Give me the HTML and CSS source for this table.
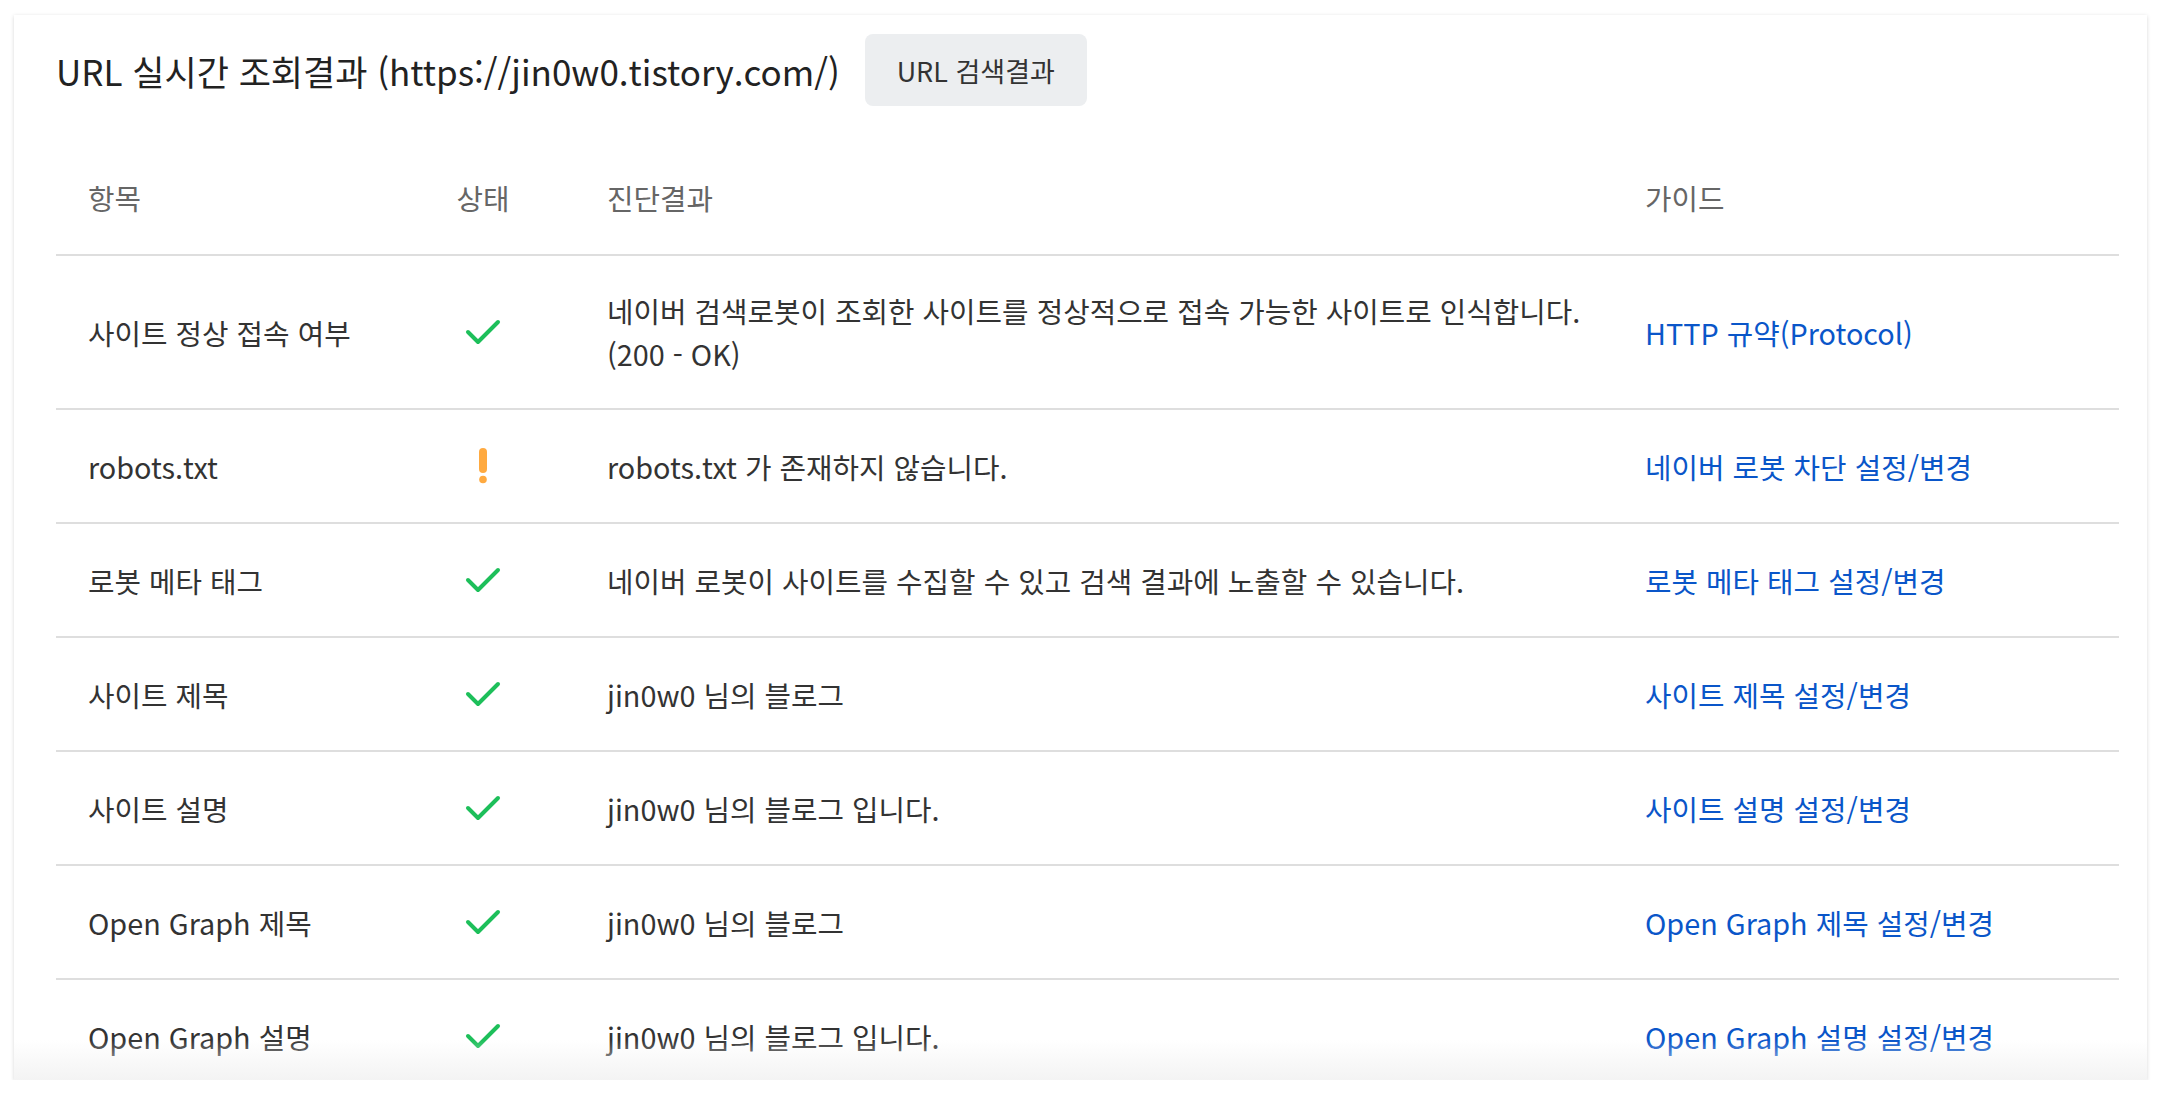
FILE: index.html
```html
<!DOCTYPE html>
<html lang="ko">
<head>
    <meta charset="UTF-8">
    <meta name="viewport" content="width=device-width, initial-scale=1.0">
    <title>URL 실시간 조회결과</title>
    <link rel="stylesheet" href="styles.css">
</head>
<body>

    <div class="result-box">
        <div class="result-head">
            <h2>URL 실시간 조회결과 (https://jin0w0.tistory.com/)</h2>
            <button type="button" class="btn-search">URL 검색결과</button>
        </div>

        <table class="result-table">
            <colgroup>
                <col class="col-item">
                <col class="col-state">
                <col class="col-desc">
                <col class="col-guide">
            </colgroup>
            <tr>
                <th>항목</th>
                <th class="state">상태</th>
                <th>진단결과</th>
                <th>가이드</th>
            </tr>
            <tr>
                <td>사이트 정상 접속 여부</td>
                <td class="state"><svg class="ico-ok" width="36" height="28" viewBox="0 0 36 28"><polyline points="3,14 13,24 33,4" /></svg></td>
                <td>네이버 검색로봇이 조회한 사이트를 정상적으로 접속 가능한 사이트로 인식합니다.<br>(200 - OK)</td>
                <td><a href="#">HTTP 규약(Protocol)</a></td>
            </tr>
            <tr>
                <td>robots.txt</td>
                <td class="state"><svg class="ico-warn" width="8" height="36" viewBox="0 0 8 36"><rect x="0" y="0" width="8" height="25" rx="4" /><circle cx="4" cy="31.5" r="3.8" /></svg></td>
                <td>robots.txt 가 존재하지 않습니다.</td>
                <td><a href="#">네이버 로봇 차단 설정/변경</a></td>
            </tr>
            <tr>
                <td>로봇 메타 태그</td>
                <td class="state"><svg class="ico-ok" width="36" height="28" viewBox="0 0 36 28"><polyline points="3,14 13,24 33,4" /></svg></td>
                <td>네이버 로봇이 사이트를 수집할 수 있고 검색 결과에 노출할 수 있습니다.</td>
                <td><a href="#">로봇 메타 태그 설정/변경</a></td>
            </tr>
            <tr>
                <td>사이트 제목</td>
                <td class="state"><svg class="ico-ok" width="36" height="28" viewBox="0 0 36 28"><polyline points="3,14 13,24 33,4" /></svg></td>
                <td>jin0w0 님의 블로그</td>
                <td><a href="#">사이트 제목 설정/변경</a></td>
            </tr>
            <tr>
                <td>사이트 설명</td>
                <td class="state"><svg class="ico-ok" width="36" height="28" viewBox="0 0 36 28"><polyline points="3,14 13,24 33,4" /></svg></td>
                <td>jin0w0 님의 블로그 입니다.</td>
                <td><a href="#">사이트 설명 설정/변경</a></td>
            </tr>
            <tr>
                <td>Open Graph 제목</td>
                <td class="state"><svg class="ico-ok" width="36" height="28" viewBox="0 0 36 28"><polyline points="3,14 13,24 33,4" /></svg></td>
                <td>jin0w0 님의 블로그</td>
                <td><a href="#">Open Graph 제목 설정/변경</a></td>
            </tr>
            <tr>
                <td>Open Graph 설명</td>
                <td class="state"><svg class="ico-ok" width="36" height="28" viewBox="0 0 36 28"><polyline points="3,14 13,24 33,4" /></svg></td>
                <td>jin0w0 님의 블로그 입니다.</td>
                <td><a href="#">Open Graph 설명 설정/변경</a></td>
            </tr>
        </table>
    </div>

</body>
</html>
```

FILE: styles.css
```css
body {
    margin: 0;
    background-color: #fff;
    font-family: "Noto Sans CJK KR", "Noto Sans", sans-serif;
    color: #333;
}

.result-box {
    position: relative;
    margin: 15px 15px 0 14px;
    height: 1065px;
    padding: 0 28px 0 42px;
    background-color: #fff;
    box-shadow: 0 1px 4px rgba(0, 0, 0, 0.16);
    overflow: hidden;
    box-sizing: border-box;
}

/* fade at the bottom edge */
.result-box::after {
    content: "";
    position: absolute;
    left: 0;
    right: 0;
    bottom: 0;
    height: 40px;
    background: linear-gradient(rgba(245, 245, 245, 0), rgba(242, 242, 242, 0.9));
}

.result-head {
    display: flex;
    align-items: center;
    gap: 25px;
    padding-top: 19px;
}

.result-head h2 {
    margin: 0;
    font-size: 35px;
    font-weight: 400;
    color: #222;
}

.btn-search {
    width: 222px;
    height: 72px;
    border: none;
    border-radius: 8px;
    background-color: #eceef0;
    color: #333;
    font-family: inherit;
    font-size: 27px;
    cursor: pointer;
}

.result-table {
    width: 100%;
    margin-top: 35px;
    border-collapse: collapse;
    table-layout: fixed;
    font-size: 28.8px;
    line-height: 43px;
}

.col-item { width: 335px; }
.col-state { width: 184px; }
.col-guide { width: 506px; }

.result-table tr {
    height: 114px;
}

.result-table th,
.result-table td {
    padding: 33px 32px;
    text-align: left;
    vertical-align: middle;
    border-bottom: 2px solid #dedede;
}

.result-table th {
    font-weight: 400;
    color: #666;
}

.result-table .state {
    text-align: center;
}

.result-table svg {
    display: block;
    margin: 0 auto;
}

.ico-ok polyline {
    fill: none;
    stroke: #1dbf5a;
    stroke-width: 4;
    stroke-linecap: round;
    stroke-linejoin: round;
}

.ico-warn {
    fill: #ffaa40;
}

.result-table a {
    color: #0a56c9;
    text-decoration: none;
}
```
